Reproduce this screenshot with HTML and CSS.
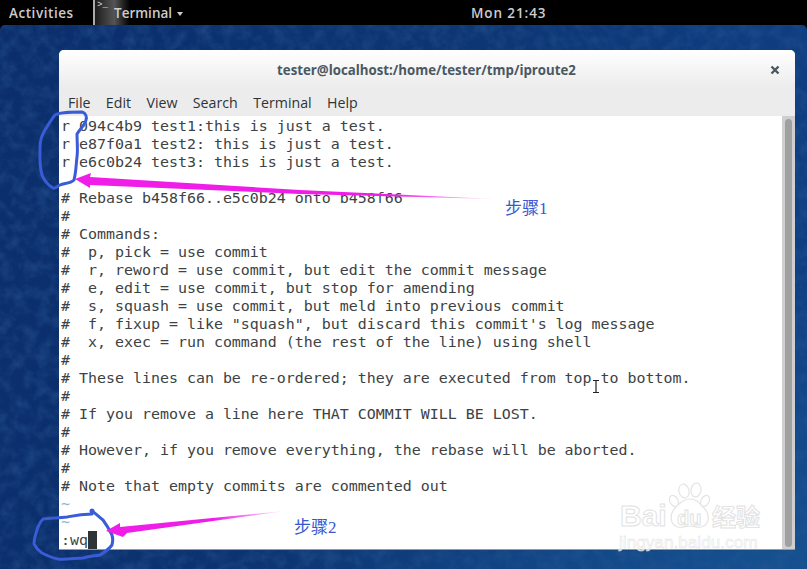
FILE: index.html
```html
<!DOCTYPE html>
<html lang="en">
<head>
<meta charset="utf-8">
<title>Terminal</title>
<link rel="stylesheet" href="styles.css">
</head>
<body>
<header class="topbar">
  <span class="activities">Activities</span>
  <span class="app">
    <span class="app-icon">&gt;_</span>
    <span class="app-name">Terminal</span>
    <span class="app-arrow"></span>
  </span>
  <span class="clock">Mon 21:43</span>
</header>
<main class="desktop">
  <svg class="noise" width="807" height="544" aria-hidden="true">
    <filter id="grain"><feTurbulence type="fractalNoise" baseFrequency="0.08" numOctaves="4" seed="7"/><feColorMatrix values="0 0 0 0 0.02  0 0 0 0 0.09  0 0 0 0 0.28  1.1 0 0 0 -0.42"/></filter>
    <rect width="807" height="544" filter="url(#grain)"/>
  </svg>
  <section class="window">
    <div class="titlebar">
      <span class="title">tester@localhost:/home/tester/tmp/iproute2</span>
      <svg class="close" width="10" height="10" viewBox="0 0 10 10" aria-hidden="true"><path d="M1.5 1.5l7 7M8.5 1.5l-7 7"/></svg>
    </div>
    <nav class="menubar">
      <span>File</span><span>Edit</span><span>View</span><span>Search</span><span>Terminal</span><span>Help</span>
    </nav>
    <div class="term-area">
<pre class="terminal">r 094c4b9 test1:this is just a test.
r e87f0a1 test2: this is just a test.
r e6c0b24 test3: this is just a test.

# Rebase b458f66..e5c0b24 onto b458f66
#
# Commands:
#  p, pick = use commit
#  r, reword = use commit, but edit the commit message
#  e, edit = use commit, but stop for amending
#  s, squash = use commit, but meld into previous commit
#  f, fixup = like "squash", but discard this commit's log message
#  x, exec = run command (the rest of the line) using shell
#
# These lines can be re-ordered; they are executed from top to bottom.
#
# If you remove a line here THAT COMMIT WILL BE LOST.
#
# However, if you remove everything, the rebase will be aborted.
#
# Note that empty commits are commented out
<span class="tilde">~</span>
<span class="tilde">~</span>
:wq<span class="cursor"> </span></pre>
      <div class="scrollbar"><div class="thumb"></div></div>
    </div>
  </section>
</main>
<svg class="marks" width="807" height="569" viewBox="0 0 807 569" aria-hidden="true">
  <defs>
    <linearGradient id="fade1" gradientUnits="userSpaceOnUse" x1="75" y1="0" x2="495" y2="0"><stop offset="0.75" stop-color="#f01ce8"/><stop offset="1" stop-color="#f01ce8" stop-opacity="0.15"/></linearGradient>
    <linearGradient id="fade2" gradientUnits="userSpaceOnUse" x1="106" y1="0" x2="285" y2="0"><stop offset="0.6" stop-color="#f01ce8"/><stop offset="1" stop-color="#f01ce8" stop-opacity="0.1"/></linearGradient>
  </defs>
  <g class="paw">
    <ellipse cx="684" cy="491" rx="5" ry="7" transform="rotate(-15 684 491)"/>
    <ellipse cx="696" cy="490" rx="5" ry="7" transform="rotate(10 696 490)"/>
    <ellipse cx="705" cy="501" rx="4" ry="6" transform="rotate(30 705 501)"/>
    <ellipse cx="674" cy="501" rx="4" ry="6" transform="rotate(-30 674 501)"/>
    <path d="M690 499c7 0 10 5 14 9 6 6 6 17-3 19-4 1-7-1-11-1s-8 2-12 1c-8-2-9-12-3-19 4-4 8-9 15-9z"/>
  </g>
  <path class="pen" d="M55 115C60 112 70 112 82 112C86 113 87 117 86 120C85 125 80 129 77 134C77 142 78 150 77 157C76 165 76 173 74 180C70 184 64 183 60 185C56 187 55 189 53 188C48 185 44 180 42 175C39 165 40 155 40 147C40 140 42 135 45 130C48 125 51 120 55 115Z"/>
  <path class="pen" d="M92 511C92 512 92 513 92 514C80 514 72 516 67 517C58 518 50 518 43 519C40 522 39 525 38 527C36 533 34 538 34 544C36 548 39 551 42 553C48 556 52 558 58 559C66 560 76 558 83 558C90 556 95 556 100 555C105 552 109 549 112 545C113 541 113 538 112 535C109 529 106 524 103 520C99 517 95 513 92 511Z"/>
  <circle class="dot" cx="92" cy="511" r="2.5"/>
  <polygon fill="url(#fade1)" points="75,179 91,173 90,177 300,190 495,199 300,194 90,185 90,188"/>
  <polygon fill="url(#fade2)" points="106,531 120,523 120,527 285,511 127,533 123,537"/>
  <path class="ibeam" d="M593 380.500h6M596 380.500v12M593 392.500h6"/>
</svg>
<span class="step step-one">步骤1</span>
<span class="step step-two">步骤2</span>
<span class="wm wm-bai">Bai</span>
<span class="wm wm-du">du</span>
<span class="wm wm-jy">经验</span>
<span class="wm wm-url">jingyan.baidu.com</span>
</body>
</html>
```
FILE: styles.css
```css
html, body {
  margin: 0;
  height: 100%;
  overflow: hidden;
  background: #000;
}
body {
  display: flex;
  flex-direction: column;
  width: 807px;
  height: 569px;
  position: relative;
  font-family: "Open Sans", "Noto Sans", sans-serif;
}
.topbar {
  height: 25px;
  flex: none;
  display: flex;
  align-items: center;
  color: #ccc;
  font-size: 13.5px;
  font-weight: 600;
  background: #000;
}
.activities {
  margin-left: 9px;
  width: 84px;
  letter-spacing: 0.55px;
}
.app {
  display: flex;
  align-items: center;
  height: 25px;
  width: 92px;
  position: relative;
}
.app-icon {
  width: 37px;
  height: 25px;
  margin-right: -16px;
  border-left: 2px solid #aaa;
  box-sizing: border-box;
  color: #ddd;
  font: 9px/11px "Liberation Mono", monospace;
  padding-left: 2px;
  background: linear-gradient(90deg, #1c1c1c 0%, #555 55%, #1a1a1a 85%, #000 100%);
}
.app-name {
  position: relative;
}
.app-arrow {
  width: 0;
  height: 0;
  margin: 3px 0 0 5px;
  border: 3.5px solid transparent;
  border-top: 4px solid #ccc;
  border-bottom: 0;
}
.clock {
  margin-left: 286px;
  letter-spacing: 0.9px;
}
.desktop {
  flex: 1;
  position: relative;
  padding: 25px 12px 19px 59px;
  border-radius: 5px 5px 0 0;
  overflow: hidden;
  background:
    radial-gradient(ellipse 520px 300px at 780px 540px, #15508f 0%, rgba(21, 80, 143, 0) 100%),
    linear-gradient(100deg, #0b2d6b 0%, #0d3675 55%, #0f4084 100%);
}
.noise {
  position: absolute;
  left: 0;
  top: 0;
}
.window {
  position: relative;
  height: 500px;
  display: flex;
  flex-direction: column;
  background: #ececec;
  border-radius: 5px 5px 0 0;
  box-shadow: 0 0 1px #333;
}
.titlebar {
  height: 38px;
  flex: none;
  display: flex;
  align-items: center;
  justify-content: center;
  position: relative;
  padding-top: 2px;
  box-sizing: border-box;
  border-radius: 5px 5px 0 0;
  background: linear-gradient(#fff, #ececec);
}
.title {
  color: #4a5862;
  font-size: 13.25px;
  font-weight: 700;
  margin-left: -1px;
}
.close {
  position: absolute;
  right: 15px;
  top: 15px;
}
.close path {
  stroke: #4a5862;
  stroke-width: 2.4;
  fill: none;
}
.menubar {
  height: 28px;
  flex: none;
  display: flex;
  align-items: center;
  gap: 15.4px;
  padding: 0 0 0 9px;
  box-sizing: border-box;
  color: #2e3436;
  font-size: 14.2px;
}
.term-area {
  flex: 1;
  min-height: 0;
  display: flex;
  background: #fff;
  border-bottom: 1px solid #999;
}
.terminal {
  flex: 1;
  margin: 0;
  padding: 1px 0 0 2px;
  color: #3d4244;
  font: 14.95px/18px "DejaVu Sans Mono", monospace;
  overflow: hidden;
}
.tilde {
  color: #8fb4d8;
}
.cursor {
  background: #2e3436;
}
.scrollbar {
  width: 13px;
  flex: none;
  background: #cfcfcf;
  padding: 3px 3px 2px;
  box-sizing: border-box;
}
.thumb {
  height: 100%;
  background: #a0a0a0;
  border-radius: 4px;
}
.marks {
  position: absolute;
  left: 0;
  top: 0;
}
.pen {
  fill: none;
  stroke: #3a5cd8;
  stroke-width: 3;
  stroke-linejoin: round;
}
.dot {
  fill: #3a5cd8;
}
.ibeam {
  fill: none;
  stroke: #222;
  stroke-width: 1.2;
}
.paw ellipse,
.paw path {
  fill: rgba(255, 255, 255, 0.6);
  stroke: #e4e4e4;
  stroke-width: 1.2;
}
.step {
  position: absolute;
  color: #3558d0;
  font: 17px/20px "Liberation Serif", "Noto Sans CJK SC", serif;
}
.step-one {
  left: 505px;
  top: 199px;
}
.step-two {
  left: 294px;
  top: 518px;
}
.wm {
  position: absolute;
  color: rgba(255, 255, 255, 0.7);
  -webkit-text-stroke: 1px #e2e2e2;
  font-family: "Liberation Sans", sans-serif;
  font-weight: 700;
}
.wm-bai {
  left: 620px;
  top: 500px;
  font-size: 30px;
  line-height: 32px;
}
.wm-du {
  left: 677px;
  top: 507px;
  font-size: 20px;
  line-height: 22px;
}
.wm-jy {
  left: 712px;
  top: 503px;
  font: 700 24px/26px "Noto Sans CJK SC", sans-serif;
}
.wm-url {
  left: 619px;
  top: 532px;
  font-size: 17.2px;
  line-height: 20px;
  font-weight: 400;
  -webkit-text-stroke: 0.5px #e2e2e2;
}
```
